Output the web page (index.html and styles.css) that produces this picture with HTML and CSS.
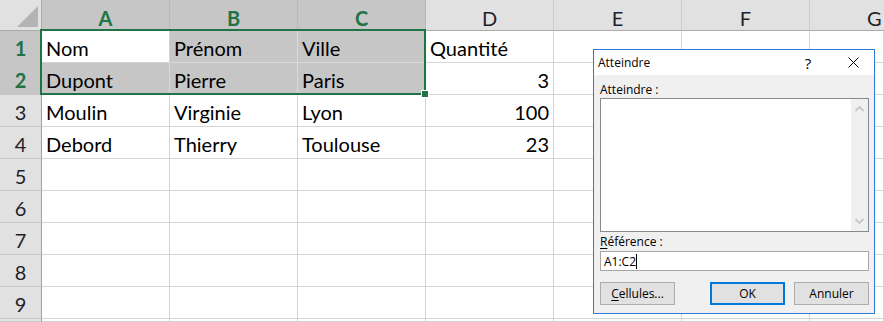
FILE: index.html
```html
<!DOCTYPE html>
<html lang="fr">
<head>
    <meta charset="UTF-8">
    <title>Atteindre</title>
    <link rel="stylesheet" href="styles.css">
</head>
<body>
    <div class="sheet" id="sheet"></div>

    <div class="selection"><span class="fill-handle"></span></div>

    <div class="dialog">
        <div class="dialog-title">
            <span class="title-text">Atteindre</span>
            <span class="title-btn help">?</span>
            <span class="title-btn close">
                <svg width="11" height="11" viewBox="0 0 11 11">
                    <path d="M0.5 0.5 L10.5 10.5 M10.5 0.5 L0.5 10.5" stroke="#000" stroke-width="1" fill="none"/>
                </svg>
            </span>
        </div>
        <div class="dialog-body">
            <div class="label">Atteindre :</div>
            <div class="listbox">
                <div class="list-items"></div>
                <div class="scrollbar">
                    <svg width="9" height="6" viewBox="0 0 9 6">
                        <path d="M0.5 5 L4.5 1 L8.5 5" stroke="#c2c2c2" stroke-width="1.6" fill="none"/>
                    </svg>
                    <svg width="9" height="6" viewBox="0 0 9 6">
                        <path d="M0.5 1 L4.5 5 L8.5 1" stroke="#c2c2c2" stroke-width="1.6" fill="none"/>
                    </svg>
                </div>
            </div>
            <div class="label label-ref"><u>R</u>éférence :</div>
            <div class="textbox">A1:C2<span class="caret"></span></div>
            <div class="buttons">
                <div class="btn"><u>C</u>ellules...</div>
                <div class="btn btn-default">OK</div>
                <div class="btn">Annuler</div>
            </div>
        </div>
    </div>

    <script>
        const sheet = document.getElementById('sheet');
        const columns = ['A', 'B', 'C', 'D', 'E', 'F', 'G'];
        const data = [
            ['Nom', 'Prénom', 'Ville', 'Quantité'],
            ['Dupont', 'Pierre', 'Paris', 3],
            ['Moulin', 'Virginie', 'Lyon', 100],
            ['Debord', 'Thierry', 'Toulouse', 23]
        ];

        function addCell(className, text) {
            const cell = document.createElement('div');
            cell.className = className;
            if (text !== undefined) cell.textContent = text;
            sheet.appendChild(cell);
        }

        addCell('corner');
        columns.forEach((col, i) => {
            let cls = i < 3 ? 'col-head selected' : 'col-head';
            if (i === columns.length - 1) cls += ' last';
            addCell(cls, col);
        });

        // row 10 only shows a sliver at the bottom edge, so no label
        for (let r = 1; r <= 10; r++) {
            addCell(r <= 2 ? 'row-head selected' : 'row-head', r < 10 ? r : undefined);
            const row = data[r - 1] || [];
            columns.forEach((col, c) => {
                let cls = 'cell';
                const value = row[c];
                if (typeof value === 'number') cls += ' num';
                if (r <= 2 && c < 3 && !(r === 1 && c === 0)) cls += ' in-range';
                addCell(cls, value);
            });
        }
    </script>
</body>
</html>
```

FILE: styles.css
```css
body {
    margin: 0;
    background-color: #ffffff;
    overflow: hidden;
    height: 322px;
    position: relative;
}

/* spreadsheet */
.sheet {
    display: grid;
    grid-template-columns: 42px repeat(6, 128px) 74px;
    grid-template-rows: 31px repeat(9, 32px) 3px;
    font-family: Lato, "Liberation Sans", sans-serif;
    font-size: 20px;
    color: #000;
}

.sheet > div {
    box-sizing: border-box;
    display: flex;
    align-items: center;
    white-space: nowrap;
    overflow: hidden;
}

.corner {
    background-color: #e1e1e1;
    border-right: 1px solid #ababab;
    border-bottom: 1px solid #ababab;
    position: relative;
}

.corner::after {
    content: "";
    position: absolute;
    right: 3px;
    bottom: 3px;
    width: 0;
    height: 0;
    border-left: 21px solid transparent;
    border-bottom: 21px solid #b4b4b4;
}

.col-head {
    background-color: #e1e1e1;
    border-right: 1px solid #cdcdcd;
    border-bottom: 1px solid #ababab;
    justify-content: center;
    padding-top: 5px;
    color: #1f1f2a;
}

/* last column is cut by the window edge, keep the letter where it would sit */
.col-head.last {
    justify-content: flex-start;
    padding-left: 57px;
    border-right: none;
}

.row-head {
    background-color: #e1e1e1;
    border-right: 1px solid #9f9f9f;
    border-bottom: 1px solid #c9c9c9;
    justify-content: center;
    padding-top: 2px;
    color: #1f1f2a;
}

.col-head.selected,
.row-head.selected {
    background-color: #c6c6c6;
    color: #217346;
    font-weight: bold;
}

.col-head.selected {
    border-right-color: #b8b8b8;
}

.cell {
    border-right: 1px solid #d4d4d4;
    border-bottom: 1px solid #d4d4d4;
    padding: 2px 4px 0 4px;
}

.cell.num {
    justify-content: flex-end;
}

.cell.in-range {
    background-color: #c6c6c6;
    border-color: #dadada;
}

.selection {
    position: absolute;
    left: 40px;
    top: 29px;
    width: 386px;
    height: 66px;
    box-sizing: border-box;
    border: 2px solid #217346;
}

.fill-handle {
    position: absolute;
    right: -5px;
    bottom: -5px;
    width: 6px;
    height: 6px;
    background-color: #217346;
    border: 1px solid #ffffff;
}

/* dialog */
.dialog {
    position: absolute;
    left: 593px;
    top: 49px;
    width: 282px;
    height: 265px;
    box-sizing: border-box;
    border: 1px solid #2b7bd4;
    background-color: #f0f0f0;
    font-family: "Open Sans", "Liberation Sans", sans-serif;
    font-size: 12px;
    color: #000;
    display: flex;
    flex-direction: column;
}

.dialog-title {
    height: 25px;
    background-color: #ffffff;
    display: flex;
    align-items: center;
}

.title-text {
    flex: 1;
    padding-left: 4px;
}

.title-btn {
    display: flex;
    align-items: center;
    justify-content: center;
    height: 25px;
}

.help {
    width: 48px;
    font-size: 15px;
}

.close {
    width: 42px;
}

.dialog-body {
    padding: 7px 5px 8px 6px;
    display: flex;
    flex-direction: column;
}

.label {
    height: 15px;
    line-height: 15px;
}

.label-ref {
    margin-top: 2px;
}

.label u,
.btn u {
    text-underline-offset: 2px;
}

.listbox {
    margin-top: 1px;
    height: 134px;
    box-sizing: border-box;
    border: 1px solid #868892;
    background-color: #ffffff;
    display: flex;
}

.list-items {
    flex: 1;
}

.scrollbar {
    width: 17px;
    background-color: #f0f0f0;
    display: flex;
    flex-direction: column;
    justify-content: space-between;
    align-items: center;
    padding: 7px 0 7px;
}

.textbox {
    margin-top: 2px;
    height: 20px;
    box-sizing: border-box;
    border: 1px solid #a6a6a6;
    background-color: #ffffff;
    padding-left: 3px;
    display: flex;
    align-items: center;
}

.caret {
    width: 1px;
    height: 15px;
    background-color: #000;
}

.buttons {
    margin-top: 11px;
    display: flex;
    gap: 9px;
}

.btn {
    width: 75px;
    height: 23px;
    box-sizing: border-box;
    border: 1px solid #adadad;
    background-color: #e1e1e1;
    display: flex;
    align-items: center;
    justify-content: center;
}

.btn:first-child {
    margin-right: 26px;
}

.btn-default {
    border: 2px solid #0078d7;
}
```
